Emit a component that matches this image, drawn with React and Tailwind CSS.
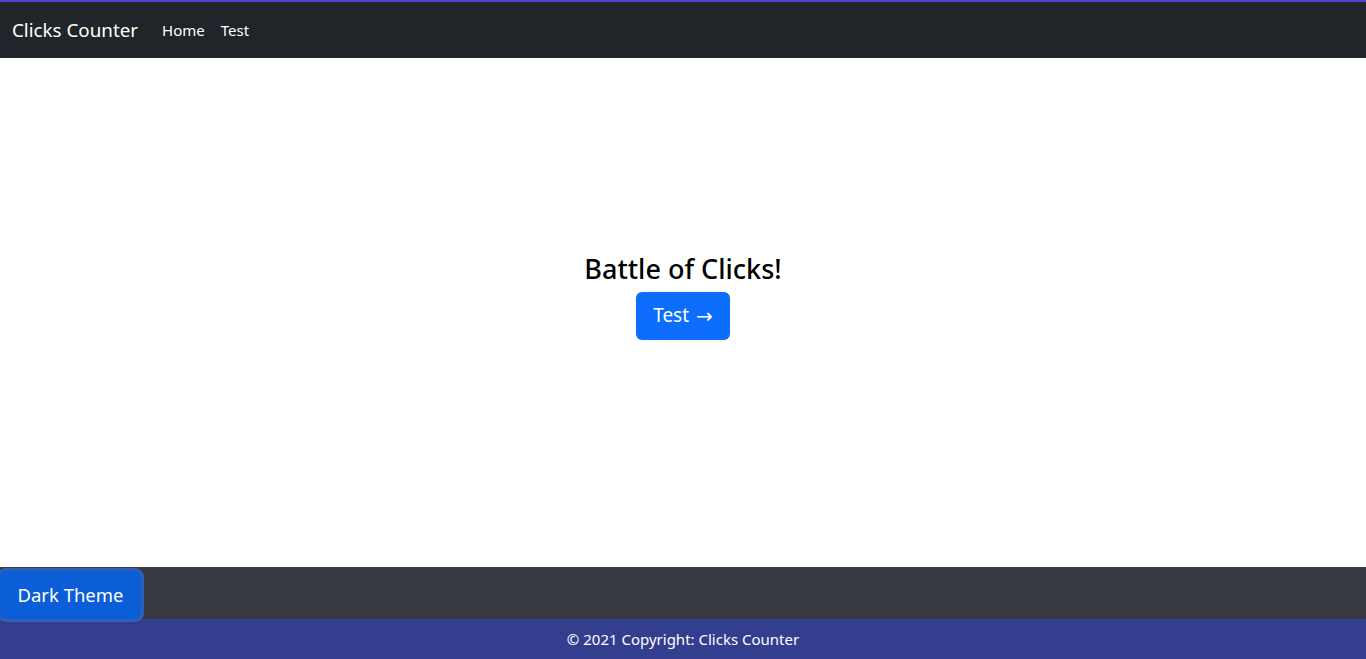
import React from 'react';

export default function App() {
  return (
    <div className="flex flex-col h-[659px] bg-white" style={{ fontFamily: '"Noto Sans", "Open Sans", sans-serif' }}>
      <nav className="flex items-center h-[58px] bg-[#212529] border-t-2 border-[#5b3fd1] px-3">
        <span className="text-white text-[18.8px] mr-[24px]">Clicks Counter</span>
        <a className="text-white text-[15px] mr-4">Home</a>
        <a className="text-white text-[15px]">Test</a>
      </nav>

      <main className="flex-1 flex flex-col items-center justify-center pb-[32px]">
        <h3 className="text-[27px] font-medium text-black leading-[1.2] mb-[6px]">Battle of Clicks!</h3>
        <button className="bg-[#0d6efd] text-white text-[19px] rounded-md w-[94px] h-[48px] flex items-center justify-center gap-[7px]">
          <span>Test</span>
          <span className="text-[20px] leading-none" style={{ fontFamily: '"DejaVu Sans", sans-serif' }}>→</span>
        </button>
      </main>

      <div className="h-[52px] bg-[#373a41] flex items-end">
        <button className="h-[48px] w-[141px] bg-[#0b5ed7] text-white text-[18.5px] rounded-md shadow-[0_0_0_3px_#315fb8] relative z-10">
          Dark Theme
        </button>
      </div>

      <footer className="h-[40px] bg-[#333e8f] flex items-center justify-center text-white text-[15px]">
        © 2021 Copyright: Clicks Counter
      </footer>
    </div>
  );
}
